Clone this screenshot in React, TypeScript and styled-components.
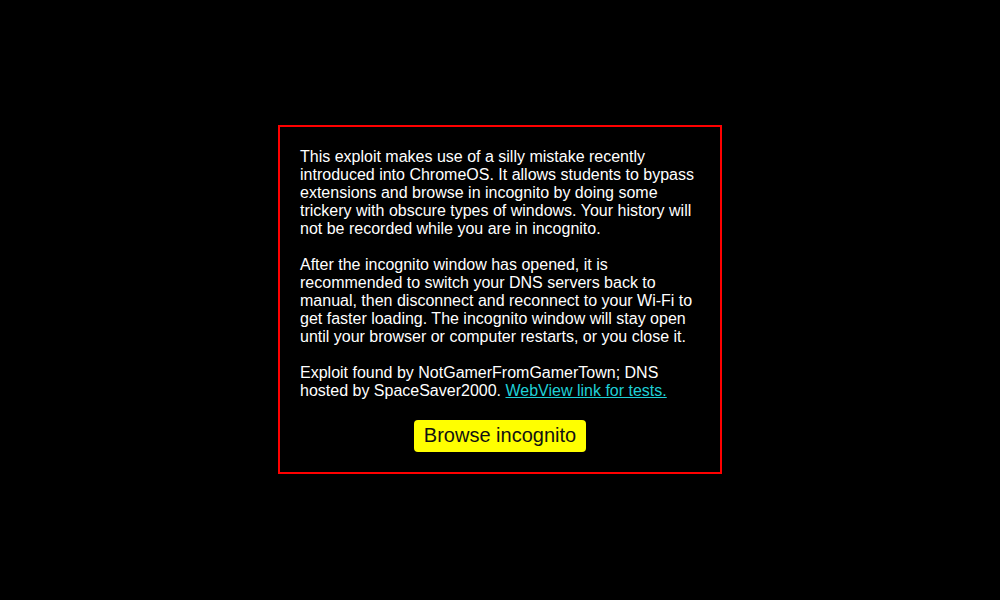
import React from "react";
import styled, { createGlobalStyle } from "styled-components";

const Global = createGlobalStyle`
  html, body { margin: 0; padding: 0; background: #000; }
  body { font-family: "Liberation Sans", Arial, sans-serif; color: #fff; }
`;

const Page = styled.div`
  width: 1000px;
  height: 600px;
  display: flex;
  align-items: center;
  justify-content: center;
  background: #000;
`;

const Card = styled.div`
  width: 400px;
  padding: 21px 20px 20px;
  border: 2px solid #ff0000;
  display: flex;
  flex-direction: column;
  align-items: stretch;
  margin-top: -2px;
`;

const Para = styled.p<{ $last?: boolean }>`
  margin: 0 0 ${(p) => (p.$last ? "0" : "18px")};
  font-size: 16px;
  line-height: 18px;
`;

const Link = styled.a`
  color: #1fcfd6;
  text-decoration: underline;
`;

const Button = styled.button`
  align-self: center;
  margin-top: 20px;
  height: 32px;
  padding: 0 10px;
  border: none;
  border-radius: 4px;
  background: #ffff00;
  color: #111;
  font-family: "Liberation Sans", Arial, sans-serif;
  font-size: 20px;
  cursor: pointer;
`;

export default function App() {
  return (
    <>
      <Global />
      <Page>
        <Card>
          <Para>
            This exploit makes use of a silly mistake recently introduced into ChromeOS. It
            allows students to bypass extensions and browse in incognito by doing some trickery
            with obscure types of windows. Your history will not be recorded while you are in
            incognito.
          </Para>
          <Para>
            After the incognito window has opened, it is recommended to switch your DNS servers
            back to manual, then disconnect and reconnect to your Wi-Fi to get faster loading.
            The incognito window will stay open until your browser or computer restarts, or you
            close it.
          </Para>
          <Para $last>
            Exploit found by NotGamerFromGamerTown; DNS hosted by SpaceSaver2000.{" "}
            <Link href="#">WebView link for tests.</Link>
          </Para>
          <Button>Browse incognito</Button>
        </Card>
      </Page>
    </>
  );
}
